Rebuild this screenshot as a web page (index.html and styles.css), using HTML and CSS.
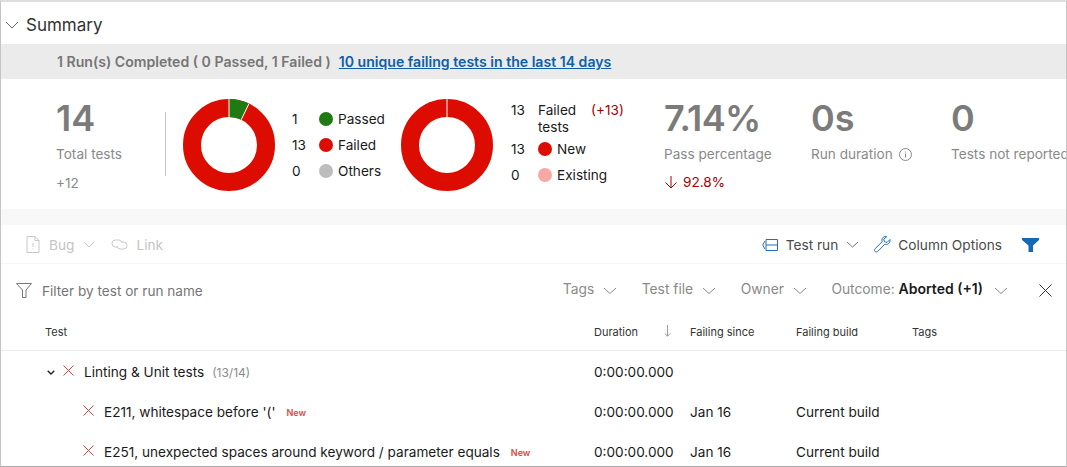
FILE: index.html
```html
<!DOCTYPE html>
<html lang="en">
<head>
  <meta charset="UTF-8">
  <title>Test summary</title>
  <link rel="stylesheet" href="styles.css">
</head>
<body>
  <div class="frame">
    <div class="section-head">
      <svg class="chev-big" width="14" height="8" viewBox="0 0 14 8"><path d="M1 1l6 6 6-6" fill="none" stroke="#666" stroke-width="1"/></svg>
      <h1>Summary</h1>
    </div>
    <div class="band">
      <span class="band-text">1 Run(s) Completed ( 0 Passed, 1 Failed )</span>
      <a class="band-link" href="#">10 unique failing tests in the last 14 days</a>
    </div>

    <div class="cards">
      <div class="stat stat-total">
        <div class="big">14</div>
        <div class="cap">Total tests</div>
        <div class="delta-grey">+12</div>
      </div>
      <div class="divider"></div>
      <svg class="donut" width="92" height="92" viewBox="0 0 92 92">
        <circle cx="46" cy="46" r="37" fill="none" stroke="#dc0d00" stroke-width="18"/>
        <path d="M46 0A46 46 0 0 1 66 4.6L58.2 20.8A28 28 0 0 0 46 18Z" fill="#1f7a12"/>
        <path d="M46 0V18M66 4.6L58.2 20.8" stroke="#fff" stroke-width="1"/>
      </svg>
      <div class="legend legend-a">
        <div class="leg-row"><span class="num">1</span><span class="dot green"></span>Passed</div>
        <div class="leg-row"><span class="num">13</span><span class="dot red"></span>Failed</div>
        <div class="leg-row"><span class="num">0</span><span class="dot grey"></span>Others</div>
      </div>
      <svg class="donut donut-b" width="92" height="92" viewBox="0 0 92 92">
        <circle cx="46" cy="46" r="37" fill="none" stroke="#dc0d00" stroke-width="18"/>
        <path d="M46 0V18" stroke="#fff" stroke-width="1"/>
      </svg>
      <div class="legend legend-b">
        <div class="leg-head">
          <span class="num">13</span>
          <span class="leg-title">Failed tests</span>
          <span class="plus">(+13)</span>
        </div>
        <div class="leg-row row-new"><span class="num">13</span><span class="dot red"></span>New</div>
        <div class="leg-row row-new"><span class="num">0</span><span class="dot pink"></span>Existing</div>
      </div>
      <div class="stat stat-pass">
        <div class="big">7.14%</div>
        <div class="cap">Pass percentage</div>
        <div class="delta-red">
          <svg width="14" height="14" viewBox="0 0 14 14"><path d="M7 1v12M1.500 7.500L7 13l5.500-5.500" fill="none" stroke="#a80000" stroke-width="1"/></svg>
          92.8%
        </div>
      </div>
      <div class="stat stat-run">
        <div class="big">0s</div>
        <div class="cap">Run duration
          <svg class="info" width="13" height="13" viewBox="0 0 13 13"><circle cx="6.500" cy="6.500" r="6" fill="none" stroke="#888"/><path d="M6.500 5.500v4M6.500 3.500v1" stroke="#888"/></svg>
        </div>
      </div>
      <div class="stat stat-missing">
        <div class="big">0</div>
        <div class="cap">Tests not reported</div>
      </div>
    </div>

    <div class="strip"></div>

    <div class="toolbar">
      <div class="tool-left">
        <svg width="14" height="17" viewBox="0 0 14 17"><path d="M1 .5h8l4 4v12H1zM9 .5v4h4M7 7v4M7 12.500v1" fill="none" stroke="#c8c8c8"/></svg>
        <span class="off off-bug">Bug</span>
        <svg class="chev" width="12" height="7" viewBox="0 0 12 7"><path d="M1 1l5 5 5-5" fill="none" stroke="#c8c8c8"/></svg>
        <svg class="link-icon" width="17" height="11" viewBox="0 0 17 11"><path d="M6 8H4.500a3.500 3.500 0 0 1 0-7H8a3.500 3.500 0 0 1 3 3M11 3h1.500a3.500 3.500 0 0 1 0 7H9a3.500 3.500 0 0 1-3-3" fill="none" stroke="#c8c8c8"/></svg>
        <span class="off">Link</span>
      </div>
      <div class="tool-right">
        <svg width="16" height="12" viewBox="0 0 16 12"><path d="M4 .5h11.500v11H4zM4 6h11.500M3 2L.7 6 3 10" fill="none" stroke="#1f6fc0"/></svg>
        <span class="tool-item">Test run</span>
        <svg class="chev" width="13" height="7" viewBox="0 0 13 7"><path d="M1 1l5.500 5L12 1" fill="none" stroke="#777"/></svg>
        <svg class="wrench" width="17" height="17" viewBox="0 0 17 17"><path d="M16 3.500l-3 3-2.500-.8-.8-2.500 3-2.500c-2.500-.8-4.800.9-4.800 3.400 0 .6.100 1.100.3 1.600L1.200 12.600c-.9 1-.8 2.100-.1 2.800.8.800 1.900.8 2.800-.1l6.800-6.900c2.800.8 5.800-1.500 5.300-4.900z" fill="none" stroke="#1f6fc0"/></svg>
        <span class="tool-item tool-columns">Column Options</span>
        <svg class="funnel" width="17" height="14" viewBox="0 0 17 14"><path d="M0 0h17v2l-6 5.500V14H6.500V7.500L0 2z" fill="#1568b8"/></svg>
      </div>
    </div>

    <div class="filter">
      <svg class="filter-icon" width="16" height="15" viewBox="0 0 16 15"><path d="M.5.500h15L10 7v7.500H6.500V7z" fill="none" stroke="#777"/></svg>
      <span class="filter-text">Filter by test or run name</span>
      <div class="filter-drops">
        <span class="drop">Tags</span>
        <svg class="chev drop-chev" width="14" height="7" viewBox="0 0 14 7"><path d="M1 1l6 5.500L13 1" fill="none" stroke="#888"/></svg>
        <span class="drop">Test file</span>
        <svg class="chev drop-chev" width="14" height="7" viewBox="0 0 14 7"><path d="M1 1l6 5.500L13 1" fill="none" stroke="#888"/></svg>
        <span class="drop">Owner</span>
        <svg class="chev drop-chev" width="14" height="7" viewBox="0 0 14 7"><path d="M1 1l6 5.500L13 1" fill="none" stroke="#888"/></svg>
        <span class="drop">Outcome: <b>Aborted (+1)</b></span>
        <svg class="chev drop-chev chev-last" width="14" height="7" viewBox="0 0 14 7"><path d="M1 1l6 5.500L13 1" fill="none" stroke="#888"/></svg>
        <svg class="close" width="13" height="13" viewBox="0 0 13 13"><path d="M.5.500l12 12M12.500.500l-12 12" fill="none" stroke="#333"/></svg>
      </div>
    </div>

    <div class="grid head">
      <div class="c-test">Test</div>
      <div class="c-dur">Duration <span class="sort"><svg width="7" height="12" viewBox="0 0 7 12"><path d="M3.500 0v11M.8 8.500l2.700 2.700 2.700-2.700" fill="none" stroke="#999"/></svg></span></div>
      <div>Failing since</div>
      <div>Failing build</div>
      <div>Tags</div>
    </div>

    <div class="grid row">
      <div class="c-test group">
        <svg class="twist" width="8" height="5" viewBox="0 0 8 5"><path d="M.7.700L4 4l3.300-3.300" fill="none" stroke="#222" stroke-width="1.300"/></svg>
        <svg class="x" width="11" height="11" viewBox="0 0 11 11"><path d="M.5.500l10 10M10.500.500l-10 10" fill="none" stroke="#e0423a"/></svg>
        <span class="name">Linting &amp; Unit tests</span> <span class="count">(13/14)</span>
      </div>
      <div>0:00:00.000</div>
      <div></div>
      <div></div>
      <div></div>
    </div>
    <div class="grid row">
      <div class="c-test child">
        <svg class="x" width="11" height="11" viewBox="0 0 11 11"><path d="M.5.500l10 10M10.500.500l-10 10" fill="none" stroke="#e0423a"/></svg>
        <span class="name">E211, whitespace before '('</span><span class="tag-new">New</span>
      </div>
      <div>0:00:00.000</div>
      <div>Jan 16</div>
      <div>Current build</div>
      <div></div>
    </div>
    <div class="grid row">
      <div class="c-test child">
        <svg class="x" width="11" height="11" viewBox="0 0 11 11"><path d="M.5.500l10 10M10.500.500l-10 10" fill="none" stroke="#e0423a"/></svg>
        <span class="name">E251, unexpected spaces around keyword / parameter equals</span><span class="tag-new">New</span>
      </div>
      <div>0:00:00.000</div>
      <div>Jan 16</div>
      <div>Current build</div>
      <div></div>
    </div>
  </div>
</body>
</html>
```

FILE: styles.css
```css
html, body {
  margin: 0;
  padding: 0;
  height: 100%;
  overflow: hidden;
  background: #fff;
}
body {
  font-family: Inter, "Liberation Sans", sans-serif;
  font-size: 13.6px;
  color: #1a1a1a;
}
.frame {
  box-sizing: border-box;
  width: 1067px;
  height: 467px;
  overflow: hidden;
  border: 1px solid #c4c4c4;
  border-top: 2px solid #dedede;
  border-bottom: 1px solid #aaa;
}

/* header */
.section-head {
  height: 42px;
  box-sizing: border-box;
  padding: 3px 0 0 4px;
  display: flex;
  align-items: center;
}
.section-head h1 {
  margin: 0 0 0 7px;
  font-size: 17px;
  font-weight: 400;
  color: #333;
}
.band {
  height: 35px;
  background: #ebebeb;
  display: flex;
  align-items: center;
  padding-left: 56px;
  font-weight: 600;
  font-size: 14.1px;
}
.band-text {
  color: #757575;
}
.band-link {
  margin-left: 8px;
  color: #0c5fa8;
}

/* stat cards */
.cards {
  height: 130px;
  display: flex;
  align-items: flex-start;
  white-space: nowrap;
  overflow: hidden;
}
.stat {
  flex: none;
  padding-top: 20px;
}
.big {
  font-size: 36px;
  line-height: 38px;
  font-weight: 600;
  color: #7b7b7b;
}
.cap {
  margin-top: 9px;
  line-height: 16px;
  color: #8a8a8a;
}
.info {
  vertical-align: -2px;
  margin-left: 2px;
}
.delta-grey {
  margin-top: 13px;
  line-height: 16px;
  color: #8a8a8a;
}
.delta-red {
  margin-top: 12px;
  line-height: 16px;
  color: #a80000;
  display: flex;
  align-items: center;
  gap: 5px;
}
.stat-total {
  margin-left: 55px;
  width: 109px;
}
.divider {
  flex: none;
  width: 1px;
  height: 64px;
  margin-top: 33px;
  background: #c8c8c8;
}
.donut {
  flex: none;
  margin: 20px 0 0 17px;
}
.donut-b {
  margin-left: 0;
}
.legend {
  flex: none;
}
.legend-a {
  width: 109px;
  margin: 27px 0 0 17px;
}
.legend-b {
  width: 153px;
  margin: 23px 0 0 18px;
}
.leg-row {
  height: 26px;
  display: flex;
  align-items: center;
}
.num {
  flex: none;
  width: 27px;
}
.dot {
  flex: none;
  width: 14px;
  height: 14px;
  border-radius: 50%;
  margin-right: 5px;
}
.green { background: #1f7a12; }
.red { background: #dc0d00; }
.grey { background: #bdbdbd; }
.pink { background: #f7a8a6; }
.leg-head {
  display: flex;
  line-height: 17px;
  height: 34px;
}
.leg-title {
  width: 53px;
  white-space: normal;
}
.plus {
  color: #a80000;
}
.stat-pass {
  width: 147px;
}
.stat-pass .big {
  letter-spacing: -0.7px;
}
.stat-run {
  width: 140px;
}

.strip {
  height: 16px;
  background: #f8f8f8;
}

/* toolbars */
.toolbar {
  height: 39px;
  border-bottom: 1px solid #f5f5f5;
  box-sizing: border-box;
  display: flex;
  align-items: center;
  justify-content: space-between;
  padding: 1px 27px 0 25px;
  font-size: 13.7px;
}
.tool-left, .tool-right {
  display: flex;
  align-items: center;
}
.off {
  color: #c4c4c4;
}
.off-bug {
  margin-left: 9px;
}
.tool-left .chev {
  margin: 0 0 0 9px;
}
.link-icon {
  margin: 0 8px 0 16px;
}
.tool-item {
  color: #4a4a4a;
  margin-left: 8px;
}
.tool-columns {
  margin-left: 7px;
}
.tool-right .chev {
  margin: 0 15px 0 8px;
}
.funnel {
  margin-left: 20px;
}
.filter {
  height: 48px;
  padding: 5px 14px 0 15px;
  box-sizing: border-box;
  display: flex;
  align-items: center;
}
.filter-text {
  margin-left: 10px;
  color: #767676;
}
.filter-drops {
  margin-left: auto;
  display: flex;
  align-items: center;
}
.drop {
  color: #8a8a8a;
  margin-top: -4px;
  font-size: 13.8px;
}
.drop b {
  color: #1a1a1a;
  font-size: 14px;
  font-weight: 600;
}
.drop-chev {
  margin: 0 24.5px 0 9px;
}
.chev-last {
  margin: 0 24px 0 11px;
}
.close {
  margin: 0 0 0 7px;
}

/* table */
.grid {
  display: grid;
  grid-template-columns: 593px 96px 106px 116px 1fr;
  white-space: nowrap;
}
.head {
  height: 39px;
  padding-top: 2px;
  align-items: center;
  border-bottom: 1px solid #ececec;
  font-size: 11px;
  box-sizing: border-box;
  color: #333;
}
.c-test {
  padding-left: 44px;
}
.c-dur {
  display: flex;
}
.sort {
  margin-left: 26px;
}
.row {
  height: 40px;
  box-sizing: border-box;
  padding-top: 2px;
  align-items: center;
}
.group {
  padding-left: 46px;
  display: flex;
  align-items: center;
}
.twist {
  margin-right: 8px;
}
.group .name {
  margin-left: 10px;
}
.count {
  font-size: 12px;
  color: #8a8a8a;
  margin-left: 8px;
}
.child {
  padding-left: 82px;
  display: flex;
  align-items: center;
}
.child .name {
  margin-left: 10px;
}
.x {
  margin-top: -4px;
}
.tag-new {
  margin-left: 11px;
  font-size: 9px;
  font-weight: 600;
  color: #dc4a42;
}
```
